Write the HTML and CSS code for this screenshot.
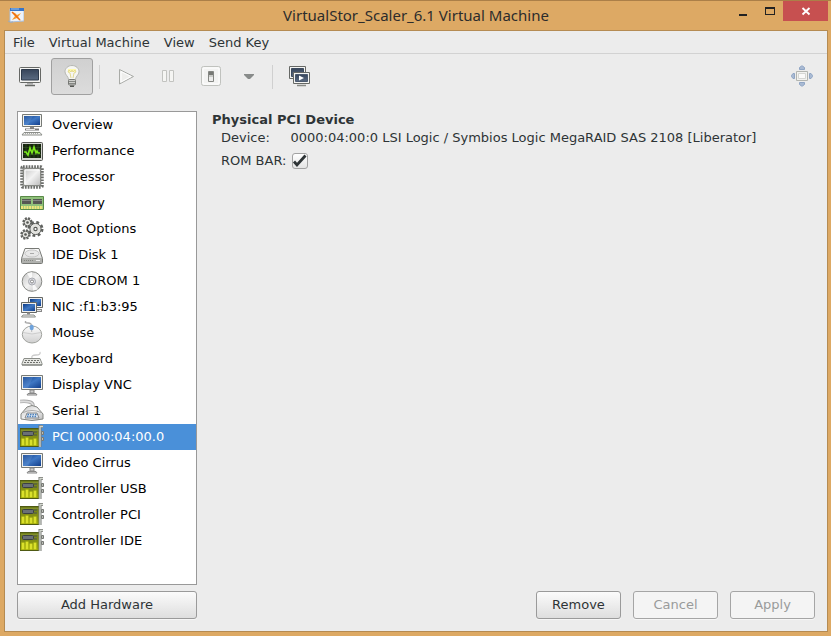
FILE: index.html
```html
<!DOCTYPE html>
<html lang="en">
<head>
<meta charset="utf-8">
<title>VirtualStor_Scaler_6.1 Virtual Machine</title>
<link rel="stylesheet" href="styles.css">
</head>
<body>
<svg class="defs" aria-hidden="true">
  <defs>
    <linearGradient id="screen" x1="0" y1="0" x2="1" y2="1"><stop offset="0" stop-color="#0b3a86"/><stop offset=".5" stop-color="#3f78c4"/><stop offset="1" stop-color="#123f8c"/></linearGradient>
    <linearGradient id="slate" x1="0" y1="0" x2="0" y2="1"><stop offset="0" stop-color="#37455a"/><stop offset="1" stop-color="#5b6b82"/></linearGradient>
    <linearGradient id="metal" x1="0" y1="0" x2="1" y2="1"><stop offset="0" stop-color="#c4c4c4"/><stop offset=".5" stop-color="#f2f2f2"/><stop offset="1" stop-color="#bcbcbc"/></linearGradient>
    <linearGradient id="pale" x1="0" y1="0" x2="0" y2="1"><stop offset="0" stop-color="#fdfdfd"/><stop offset="1" stop-color="#cfcfcf"/></linearGradient>
    <linearGradient id="board" x1="0" y1="0" x2="0" y2="1"><stop offset="0" stop-color="#6b7a1c"/><stop offset="1" stop-color="#9fa80c"/></linearGradient>
    <symbol id="overview" viewBox="0 0 24 24">
      <path d="M2.500 1.500h19v12h-19z" fill="#f4f4f0" stroke="#777a76"/><path d="M4 3h16v9H4z" fill="url(#screen)"/><path d="M4 3h9L8 12H4z" fill="#6d9bd8" opacity=".3"/>
      <path d="M10 14h4v2h-4z" fill="#888"/><path d="M5 16.500h14" stroke="#777" stroke-width="2"/><path d="M6 16.500h9" stroke="#e4e4e4"/>
      <path d="M4 19.500h16l2 2.500H2z" fill="#f4f4f2" stroke="#8b8e89"/><path d="M5 20.500h14" stroke="#aaa" stroke-dasharray="1 1"/>
    </symbol>
    <symbol id="performance" viewBox="0 0 24 24">
      <rect x="1.500" y="3.500" width="21" height="18" rx="1" fill="#d5d6d2" stroke="#555753"/><path d="M3 5h18v14H3z" fill="#17250f"/>
      <path d="M6 5v14M10 5v14M14 5v14M18 5v14M3 8.500h18M3 12h18M3 15.500h18" stroke="#315525" stroke-width=".6"/>
      <path d="M4 13h2l2 3 2-7 2 5 2-6 2 6 1-2 1 2h2" fill="none" stroke="#7bea1d" stroke-width="1.600"/>
    </symbol>
    <symbol id="processor" viewBox="0 0 24 24">
      <rect x="2" y="2" width="20" height="20" rx="1" fill="#ddd" stroke="#6c6e6b" stroke-width="3.500" stroke-dasharray="1.700 1.100"/>
      <rect x="3.500" y="3.500" width="17" height="17" rx="1.500" fill="url(#metal)" stroke="#888a85"/><path d="M5 19.500V5h14.500" fill="none" stroke="#fff"/>
    </symbol>
    <symbol id="memory" viewBox="0 0 24 24">
      <path d="M.5 5.500h23v13h-23z" fill="#8fc07a" stroke="#5a8a48"/><path d="M2 8h9v5H2zm11 0h9v5h-9z" fill="#555753"/><path d="M2 9.500h9m2 0h9" stroke="#858783"/>
      <path d="M1 16.500h22" stroke="#efe67a" stroke-width="3" stroke-dasharray="2 .7"/>
    </symbol>
    <symbol id="boot" viewBox="0 0 24 24">
      <g fill="#e3e3df" stroke="#5f615e">
        <circle cx="15.500" cy="12" r="6.300" stroke-width="3.400" stroke-dasharray="2.600 2.350" fill="none"/><circle cx="15.500" cy="12" r="5.600"/>
        <circle cx="7.500" cy="5.500" r="3.700" stroke-width="3" stroke-dasharray="1.800 1.120" fill="none"/><circle cx="7.500" cy="5.500" r="3.400"/>
        <circle cx="5.500" cy="17.500" r="3.700" stroke-width="3" stroke-dasharray="1.800 1.120" fill="none"/><circle cx="5.500" cy="17.500" r="3.400"/>
      </g>
      <g fill="#555753"><circle cx="15.500" cy="12" r="2.200"/><circle cx="7.500" cy="5.500" r="1.300"/><circle cx="5.500" cy="17.500" r="1.300"/></g><circle cx="15.500" cy="12" r="1.100" fill="#fff"/>
    </symbol>
    <symbol id="disk" viewBox="0 0 24 24">
      <path d="M5 5.500h14l3.500 10v4q0 1-1 1h-19q-1 0-1-1v-4z" fill="url(#pale)" stroke="#777975"/><path d="M2 15h20v5H2z" fill="#b0b1ae"/>
      <ellipse cx="12" cy="10.500" rx="7" ry="3.500" fill="#e8e8e8" stroke="#c5c5c5"/><path d="M10 10.500h4" stroke="#aaa"/><path d="M4 17.500h9" stroke="#858783" stroke-dasharray="1 1"/><path d="M16 17.500h4" stroke="#eee"/>
    </symbol>
    <symbol id="cdrom" viewBox="0 0 24 24">
      <circle cx="12" cy="12.500" r="9.800" fill="url(#metal)" stroke="#868884"/><path d="M12 12.500L7 4.500l5-1.500zM12 12.500l6 8-5 1z" fill="#fff" opacity=".8"/>
      <circle cx="12" cy="12.500" r="3.500" fill="#dcdde4" stroke="#a8aab0"/><circle cx="12" cy="12.500" r="1.500" fill="#fff" stroke="#888"/>
    </symbol>
    <symbol id="nic" viewBox="0 0 24 24">
      <path d="M8.500 2.500h14v10h-14z" fill="#eee" stroke="#666865"/><path d="M10 4h11v7H10z" fill="url(#screen)"/><path d="M14 15.500h8" stroke="#888" stroke-width="3"/><path d="M14 15.500h7" stroke="#e4e4e4"/>
      <path d="M1.500 7.500h15v10h-15z" fill="#eee" stroke="#666865"/><path d="M3 9h12v7H3z" fill="url(#screen)"/><path d="M7 17.500h3v2H7z" fill="#888"/><path d="M3 20h11l1.500 2h-14z" fill="#eee" stroke="#8b8e89"/>
    </symbol>
    <symbol id="mouse" viewBox="0 0 24 24">
      <path d="M11 5Q12 2 8 2T6 0" fill="none" stroke="#aaa" stroke-width="1.300"/><ellipse cx="12" cy="13.500" rx="9.700" ry="8.500" fill="url(#pale)" stroke="#a0a29e"/>
      <path d="M3 11.500q9 3 18 0" fill="none" stroke="#ccc"/><path d="M11.700 3v8" stroke="#bbb"/><ellipse cx="11.700" cy="6.500" rx="2" ry="2.800" fill="#6da2dc"/>
    </symbol>
    <symbol id="keyboard" viewBox="0 0 24 24">
      <path d="M12 11q-1-3 4-3t4-3" fill="none" stroke="#ccc" stroke-width="1.300"/><path d="M4 11.500h16l2 5v1.500H2v-1.500z" fill="#e6e7e3" stroke="#8b8e89"/>
      <path d="M5 13.500h14M4 15.500h16" stroke="#6e706c" stroke-dasharray="2 1"/><path d="M2 18h20" stroke="#777975"/>
    </symbol>
    <symbol id="display" viewBox="0 0 24 24">
      <path d="M1.500 2.500h21v14h-21z" fill="#f2f2ef" stroke="#777a76"/><path d="M3 4h18v11H3z" fill="url(#screen)"/><path d="M3 4h10L8 15H3z" fill="#6d9bd8" opacity=".3"/>
      <path d="M10 17h4v3h-4z" fill="#ccc" stroke="#888"/><path d="M8 20.500h8l1 1.500H7z" fill="#e0e0e0" stroke="#888"/>
    </symbol>
    <symbol id="serial" viewBox="0 0 24 24">
      <path d="M0 2.500q13-1 13 4v4" fill="none" stroke="#aaa" stroke-width="3.500"/><path d="M0 2.500q13-1 13 4v4" fill="none" stroke="#ddd" stroke-width="1.800"/>
      <path d="M7 8q5-3 10 0l6 7v5q-11 3-22 0v-5z" fill="url(#metal)" stroke="#858783"/><path d="M3 13.500q9-4 18 0" fill="none" stroke="#aaa"/><path d="M7 14h10l2 5H5z" fill="#dbe6f3" stroke="#888"/>
      <path d="M7.500 15.500h9M7 17.500h10" stroke="#4f83bd" stroke-width="1.300" stroke-dasharray="1.500 1"/>
    </symbol>
    <symbol id="card" viewBox="0 0 24 24">
      <path d="M0 3.500h20V21.500H0z" fill="url(#board)" stroke="#4f5a13"/><path d="M1 5.500h18" stroke="#83902c"/><rect x="2.500" y="6.500" width="11" height="4" rx="1" fill="#6a7075" stroke="#3a4043"/><path d="M14 7h3m-3 3h3" stroke="#4a5052"/>
      <path d="M1.500 13.500h3v7h-3zM5.500 12.500h3v8h-3zM9.500 14.500h3v6h-3zM13.500 13.500h3v7h-3z" fill="#ccd31a"/><path d="M3 14v6M7 13v7M11 15v5M15 14v6" stroke="#e8ee3c"/>
      <path d="M23 1.500h-3V22" fill="none" stroke="#777975" stroke-width="3"/><path d="M23 1.500h-3V22" fill="none" stroke="#d3d7cf" stroke-width="1.300"/><path d="M21.500 6.500h2v3h-2zm0 6h2v3h-2z" fill="#babdb6" stroke="#777975"/>
    </symbol>
  </defs>
</svg>

<div class="window">
  <header class="titlebar">
    <svg class="app-icon" viewBox="0 0 16 16" aria-hidden="true"><path d="M2 2h14v12l-14 1z" fill="#eef3fa" stroke="#a9bfdd"/><path d="M2 1h14v3H2z" fill="#3774c8"/><path d="M3 2h8" stroke="#9bc4ee"/><path d="M0 14q2 2 5 1" stroke="#9ab" fill="none"/><path d="M4 5l3 1 2 2 4-2-3 4 3 4-4-3-5 2 3-4z" fill="#f9982a"/><path d="M4 5l8 8" stroke="#ee6c12" stroke-width="1.500"/></svg>
    <h1>VirtualStor_Scaler_6.1 Virtual Machine</h1>
    <div class="controls">
      <button type="button" class="control" aria-label="Minimize"><svg viewBox="0 0 10 10"><path d="M1 8h8v2H1z" fill="#222"/></svg></button>
      <button type="button" class="control" aria-label="Maximize"><svg viewBox="0 0 10 10"><path d="M0 1h10v8H0zM1 3v5h8V3z" fill="#222" fill-rule="evenodd"/></svg></button>
      <button type="button" class="control close" aria-label="Close"><svg viewBox="0 0 10 10"><path d="M1.500 2l7 6.500m0-6.500l-7 6.500" stroke="#fff" stroke-width="1.900"/></svg></button>
    </div>
  </header>

  <div class="client">
    <nav class="menubar">
      <button type="button">File</button>
      <button type="button">Virtual Machine</button>
      <button type="button">View</button>
      <button type="button">Send Key</button>
    </nav>

    <div class="toolbar">
      <button type="button" class="tool" aria-label="Console"><svg viewBox="0 0 24 24"><rect x="1.500" y="2.500" width="21" height="15" rx="1" fill="#f5f5f3" stroke="#666865"/><path d="M3.500 4.500h17v10.500h-17z" fill="url(#slate)" stroke="#2e3a4b"/><path d="M9 18h6v1.500H9z" fill="#aaa"/><path d="M7 20.500h10" stroke="#666865" stroke-width="1.500"/></svg></button>
      <button type="button" class="tool active" aria-label="Details" aria-pressed="true"><svg viewBox="0 0 24 24"><path d="M12 .5c-4 0-7 2.800-7 6.300 0 3.200 3.500 4.500 3.500 7.700h7c0-3.200 3.500-4.500 3.500-7.700 0-3.500-3-6.300-7-6.300z" fill="#f6f6f3" stroke="#b5b7b3"/><path d="M8 4h8v3H8z" fill="#fff9a8"/><path d="M8 7l2 1 1 5m5-6l-2 1-1 5M8 7l1-2 2 2 1-2 1 2 2-2 1 2" fill="none" stroke="#e3da94"/><rect x="8.500" y="14.500" width="7" height="5.500" rx="1" fill="#cfd0cd" stroke="#777975"/><path d="M9 16.500h6M9 18.500h6" stroke="#858783"/><path d="M10 20.500h4v1.500h-4z" fill="#555753"/></svg></button>
      <span class="separator"></span>
      <button type="button" class="tool" aria-label="Run" disabled><svg viewBox="0 0 24 24"><path d="M4.500 4.500v14.500L18.500 11.500z" fill="#eeeeec" stroke="#a9aba7" stroke-linejoin="round"/><path d="M6 6.500v10.500l10-5.500z" fill="none" stroke="#fff"/></svg></button>
      <button type="button" class="tool" aria-label="Pause" disabled><svg viewBox="0 0 24 24"><path d="M5.500 5.500h4v11h-4zm7 0h4v11h-4z" fill="#f5f5f3" stroke="#c2c3c0"/></svg></button>
      <button type="button" class="tool" aria-label="Shut down"><svg viewBox="0 0 24 24"><rect x="2.500" y="1.500" width="19" height="19" rx="2" fill="#f3f3f2" stroke="#c0c2be"/><rect x="4" y="3" width="16" height="16" rx="1" fill="none" stroke="#fff"/><path d="M9.500 6.500h5v10h-5z" fill="#c9cac7" stroke="#858783"/><path d="M10 7h4v3h-4z" fill="#777975"/><path d="M10 12h4v4h-4z" fill="#ececeb"/></svg></button>
      <button type="button" class="tool narrow" aria-label="Shut down options"><svg viewBox="0 0 24 24"><path d="M7 9h10v1l-4 4h-2l-4-4z" fill="#888b8a"/></svg></button>
      <span class="separator"></span>
      <button type="button" class="tool" aria-label="Snapshots"><svg viewBox="0 0 24 24"><path d="M1.500 1.500h16v12h-16z" fill="#f5f5f3" stroke="#666865"/><path d="M3.500 3.500h12v8h-12z" fill="url(#slate)" stroke="#3c4a5e"/><path d="M5.500 7.500h16v11h-16z" fill="#f5f5f3" stroke="#666865"/><path d="M7.500 9.500h12v7h-12z" fill="url(#slate)" stroke="#4b5a70"/><path d="M11 10.500v5l5-2.500z" fill="#fff"/><path d="M9 20.500h9" stroke="#888a85" stroke-width="1.500"/></svg></button>
      <button type="button" class="tool end" aria-label="Full screen"><svg viewBox="0 0 24 24"><g fill="#a9bad3" stroke="#8fa5c4"><path d="M9.500 4.500v-2l2-1.500h1l2 1.500v2zM9.500 17.500v2l2 1.500h1l2-1.500v-2zM4.500 8.500h-1.500l-1.500 2v1l1.500 2h1.500zM19.500 8.500h1.500l1.500 2v1l-1.500 2h-1.500z"/></g><path d="M6.500 6.500h11v9h-11z" fill="#f2f2f0" stroke="#b3b5b0"/><path d="M8.500 8.500h7v5h-7z" fill="#fafaf9" stroke="#d5d6d3"/></svg></button>
    </div>

    <main class="content">
      <aside class="sidebar">
        <ul class="devices">
          <li><svg><use href="#overview"/></svg>Overview</li>
          <li><svg><use href="#performance"/></svg>Performance</li>
          <li><svg><use href="#processor"/></svg>Processor</li>
          <li><svg><use href="#memory"/></svg>Memory</li>
          <li><svg><use href="#boot"/></svg>Boot Options</li>
          <li><svg><use href="#disk"/></svg>IDE Disk 1</li>
          <li><svg><use href="#cdrom"/></svg>IDE CDROM 1</li>
          <li><svg><use href="#nic"/></svg>NIC :f1:b3:95</li>
          <li><svg><use href="#mouse"/></svg>Mouse</li>
          <li><svg><use href="#keyboard"/></svg>Keyboard</li>
          <li><svg><use href="#display"/></svg>Display VNC</li>
          <li><svg><use href="#serial"/></svg>Serial 1</li>
          <li class="selected"><svg><use href="#card"/></svg>PCI 0000:04:00.0</li>
          <li><svg><use href="#display"/></svg>Video Cirrus</li>
          <li><svg><use href="#card"/></svg>Controller USB</li>
          <li><svg><use href="#card"/></svg>Controller PCI</li>
          <li><svg><use href="#card"/></svg>Controller IDE</li>
        </ul>
        <button type="button" class="button">Add Hardware</button>
      </aside>

      <section class="panel">
        <h2>Physical PCI Device</h2>
        <div class="fields">
          <span>Device:</span>
          <span class="value">0000:04:00:0 LSI Logic / Symbios Logic MegaRAID SAS 2108 [Liberator]</span>
          <label for="rombar">ROM BAR:</label>
          <span class="check"><input type="checkbox" id="rombar" checked><svg viewBox="0 0 18 18" aria-hidden="true"><path d="M4 9.500l3 3.500 8.500-9.500" fill="none" stroke="#2e3436" stroke-width="2.800"/></svg></span>
        </div>
        <div class="actions">
          <button type="button" class="button">Remove</button>
          <button type="button" class="button" disabled>Cancel</button>
          <button type="button" class="button" disabled>Apply</button>
        </div>
      </section>
    </main>
  </div>
</div>
</body>
</html>
```
FILE: styles.css
```css
* { box-sizing: border-box; }
body {
  margin: 0;
  font-family: "DejaVu Sans", sans-serif;
  font-size: 13px;
  line-height: 18px;
  color: #2e3436;
}
button { font: inherit; color: inherit; margin: 0; padding: 0; border: 0; background: none; }
h1, h2, ul { margin: 0; padding: 0; }
svg { display: block; flex: none; }
.defs { position: absolute; width: 0; height: 0; }

.window {
  display: flex;
  flex-direction: column;
  min-height: 100vh;
  padding: 0 3px 4px 4px;
  border-top: 1px solid #ab7f48;
  background: #dda964;
}
.titlebar {
  display: grid;
  grid-template-columns: 1fr auto 1fr;
  height: 29px;
}
.app-icon { width: 16px; height: 16px; margin: 6px 4px; }
h1 {
  font: 400 15px/29px "Noto Sans", sans-serif;
  color: #2c2c2c;
}
.controls { display: flex; justify-content: flex-end; }
.control {
  display: flex;
  align-items: center;
  justify-content: center;
  width: 27px;
  height: 20px;
}
.control svg { width: 10px; height: 10px; }
.control.close { width: 45px; background: #c75050; }

.client {
  display: flex;
  flex: 1;
  flex-direction: column;
  border: 1px solid #b58b52;
  background: #ececec;
}
.menubar {
  display: flex;
  gap: 14px;
  height: 23px;
  padding: 2px 8px 0;
  border-bottom: 1px solid #d2d2d2;
}
.toolbar { display: flex; align-items: center; padding: 4px 4px 0; }
.tool {
  display: flex;
  align-items: center;
  justify-content: center;
  width: 42px;
  height: 37px;
}
.tool svg { width: 24px; height: 24px; }
.tool.active {
  border: 1px solid #a0a0a0;
  border-radius: 3px;
  background: linear-gradient(#d0d0d0, #dcdcdc);
}
.tool.narrow { width: 34px; }
.tool.end { margin-left: auto; }
.separator { width: 1px; height: 24px; margin: 0 6px; background: #d0d0d0; }

.content {
  display: flex;
  flex: 1;
  gap: 15px;
  padding: 16px 12px 12px;
}
.sidebar {
  display: flex;
  flex-direction: column;
  gap: 6px;
  width: 180px;
}
.devices {
  flex: 1;
  border: 1px solid #999;
  background: #fff;
  color: #000;
  list-style: none;
}
.devices li {
  display: flex;
  align-items: center;
  gap: 8px;
  height: 26px;
  padding-left: 2px;
}
.devices svg { width: 24px; height: 24px; }
.devices .selected { background: #4a90d9; color: #fff; }

.button {
  height: 28px;
  border: 1px solid #9a9a9a;
  border-radius: 3px;
  background: linear-gradient(#fbfbfb, #dedede);
  box-shadow: 0 1px #f6f6f6;
}
.button:disabled {
  border-color: #a5a5a5;
  background: #f4f4f4;
  color: #999b9b;
}

.panel { display: flex; flex: 1; flex-direction: column; }
h2 { font-size: 13px; line-height: 18px; }
.fields {
  display: grid;
  grid-template-columns: auto 1fr;
  gap: 5px 4px;
  align-items: center;
  padding-left: 9px;
}
.check { display: grid; justify-content: start; }
.check input, .check svg { grid-area: 1 / 1; width: 18px; height: 18px; }
.check input {
  appearance: none;
  width: 16px;
  height: 16px;
  margin: 1px 2px;
  border: 1px solid #a2a2a2;
  border-radius: 3px;
  background: linear-gradient(#fff, #e4e4e4);
}
.check svg { pointer-events: none; }
.actions {
  display: flex;
  justify-content: flex-end;
  gap: 12px;
  margin-top: auto;
}
.actions .button { width: 85px; }
```
